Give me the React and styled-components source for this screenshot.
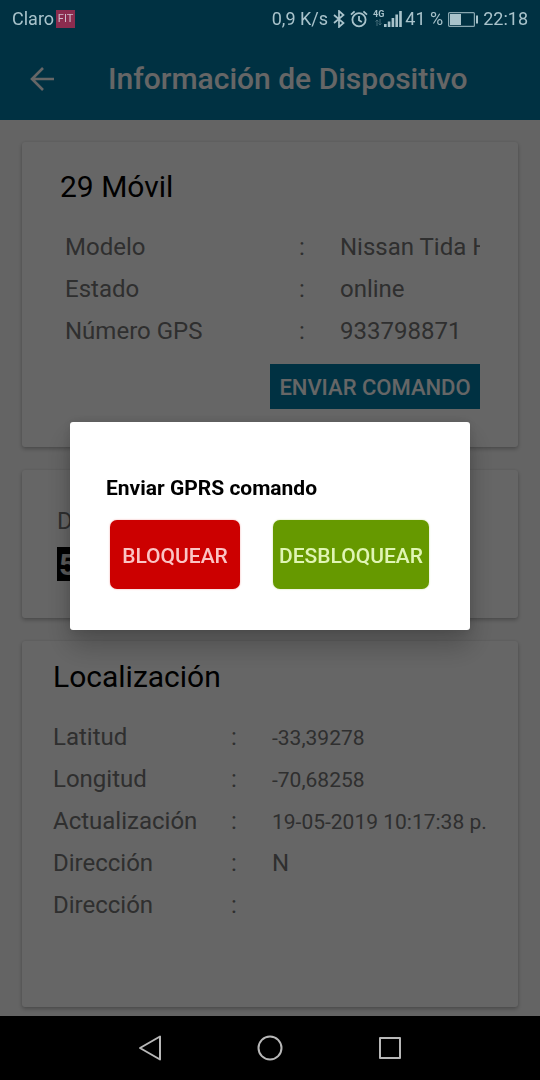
import React from "react";
import styled, { createGlobalStyle } from "styled-components";

const GlobalStyle = createGlobalStyle`
  * { box-sizing: border-box; }
  html, body { margin: 0; }
  body {
    background: #fafafa;
    color: #757575;
    font-family: Roboto, "Noto Sans", sans-serif;
  }
  h1, h2, p { margin: 0; }
  button { font-family: inherit; cursor: pointer; }
`;

const Screen = styled.div`
  display: flex;
  flex-direction: column;
  min-height: 100vh;
`;

const Header = styled.header`
  background: #007aa5;
  padding-top: 36px;
`;

const StatusBar = styled.div`
  position: fixed;
  inset: 0 0 auto;
  z-index: 3;
  display: flex;
  align-items: center;
  justify-content: space-between;
  height: 38px;
  padding: 0 12px;
  color: #a9c3cb;
  font-size: 18px;
  line-height: 20px;
  white-space: nowrap;
`;

const StatusGroup = styled.div`
  display: flex;
  align-items: center;
  gap: ${(p) => p.$gap}px;
`;

const FitBadge = styled.span`
  display: flex;
  align-items: center;
  justify-content: center;
  width: 19px;
  height: 18px;
  background: #8b2c4f;
  color: #cfbccb;
  font-size: 11px;
`;

const Toolbar = styled.div`
  display: flex;
  align-items: center;
  gap: 52px;
  height: 84px;
  padding: 2px 28px 0;
`;

const IconButton = styled.button`
  display: flex;
  align-items: center;
  justify-content: center;
  padding: 0;
  border: 0;
  background: transparent;
  color: ${(p) => p.$color};
`;

const ScreenTitle = styled.h1`
  color: #fff;
  font-size: 30px;
  font-weight: 500;
  line-height: 36px;
  white-space: nowrap;
`;

const Content = styled.main`
  flex: 1;
  display: flex;
  flex-direction: column;
  gap: 23px;
  padding: 22px 22px 9px;
`;

const Card = styled.section`
  flex: ${(p) => (p.$grow ? 1 : "none")};
  padding: ${(p) => p.$padding};
  border-radius: 3px;
  background: #fff;
  box-shadow: 0 2px 4px rgba(0, 0, 0, 0.26), 0 0 2px rgba(0, 0, 0, 0.08);
`;

const CardTitle = styled.h2`
  color: #000;
  font-size: 30px;
  font-weight: 400;
  line-height: 36px;
`;

const DataTable = styled.table`
  width: 100%;
  margin-top: ${(p) => p.$top}px;
  table-layout: fixed;
  border-collapse: collapse;
  font-size: 24px;
  line-height: 28px;
`;

const LabelCell = styled.th`
  width: ${(p) => p.$width}px;
  height: 42px;
  padding: 7px 0;
  font-weight: 400;
  text-align: left;
  vertical-align: baseline;
`;

const ColonCell = styled.td`
  width: ${(p) => p.$width}px;
  padding: 7px 0;
  vertical-align: baseline;
`;

const ValueCell = styled.td`
  padding: 0;
  overflow: hidden;
  font-size: ${(p) => (p.$small ? 21 : 24)}px;
  vertical-align: baseline;
  white-space: nowrap;
`;

const DeviceBody = styled.div`
  padding-left: 5px;
`;

const Actions = styled.div`
  display: flex;
  justify-content: flex-end;
  margin-top: 12px;
`;

const CommandButton = styled.button`
  width: 210px;
  height: 45px;
  padding: 2px 0 0;
  border: 0;
  background: #007aa5;
  color: #fff;
  font-size: 22px;
  font-weight: 500;
  white-space: nowrap;
`;

const DistanceLabel = styled.p`
  font-size: 24px;
  line-height: 28px;
`;

const Odometer = styled.div`
  width: 20px;
  height: 34px;
  margin-top: 12px;
  padding-left: 2px;
  background: #000;
  color: #e0e0e0;
  font-size: 30px;
  font-weight: 700;
  line-height: 35px;
`;

const Scrim = styled.div`
  position: fixed;
  inset: 0;
  z-index: 2;
  display: flex;
  align-items: center;
  justify-content: center;
  padding: 36px 70px 64px;
  background: rgba(0, 0, 0, 0.6);
`;

const Dialog = styled.div`
  flex: 1;
  max-width: 480px;
  padding: 52px 36px 41px;
  border-radius: 3px;
  background: #fff;
  box-shadow: 0 16px 28px rgba(0, 0, 0, 0.24), 0 0 12px rgba(0, 0, 0, 0.12);
`;

const DialogTitle = styled.h2`
  color: #000;
  font-size: 21px;
  font-weight: 700;
  line-height: 28px;
`;

const DialogActions = styled.div`
  display: flex;
  gap: 33px;
  margin-top: 18px;
  padding: 0 4px;
`;

const DialogButton = styled.button`
  flex: none;
  width: ${(p) => p.$width}px;
  height: 69px;
  padding: 2px 0 0;
  border: 0;
  border-radius: 7px;
  background: ${(p) => p.$fill};
  box-shadow: 0 0 2px ${(p) => p.$edge};
  color: ${(p) => p.$ink};
  font-size: 21px;
  font-weight: 500;
`;

const NavBar = styled.nav`
  position: sticky;
  bottom: 0;
  z-index: 3;
  display: flex;
  align-items: center;
  justify-content: center;
  gap: 92px;
  height: 64px;
  background: #000;
`;

const BluetoothIcon = () => (
  <svg width="12" height="18" viewBox="0 0 12 18" fill="none" stroke="currentColor" strokeWidth="1.7" aria-hidden="true">
    <path d="M1 5l9.500 8-4.500 4V1l4.500 4L1 13" />
  </svg>
);

const AlarmIcon = () => (
  <svg width="18" height="18" viewBox="0 0 18 18" fill="none" stroke="currentColor" strokeWidth="1.8" aria-hidden="true">
    <circle cx="9" cy="9.8" r="6.600" />
    <path d="M9 6v4.2l2.8 1.7M1 4.6L4.6 1.4M17 4.6l-3.6-3.2" />
  </svg>
);

const Signal = styled.div`
  display: flex;
  align-items: flex-start;
  height: 18px;
`;

const Network = styled.div`
  display: flex;
  flex-direction: column;
  align-items: center;
`;

const NetworkType = styled.span`
  font-family: "Liberation Sans Narrow", Roboto, sans-serif;
  font-size: 9px;
  font-weight: 700;
  line-height: 9px;
`;

const DataArrowsIcon = () => (
  <svg width="7" height="7" viewBox="0 0 7 7" fill="none" stroke="currentColor" opacity="0.4" aria-hidden="true">
    <path d="M2 7V1M.5 2.500L2 1l1.500 1.500M5 0v6M3.500 4.500L5 6l1.500-1.500" />
  </svg>
);

const SignalIcon = () => (
  <svg width="18" height="18" viewBox="0 0 18 18" fill="currentColor" aria-hidden="true">
    <path d="M0 14h2.600v3H0zM3.800 11.500h2.600V17H3.800zM7.600 8h2.600v9H7.600zM11.400 4.500h2.600v12.500h-2.600zM15.200 1h2.600v16h-2.600z" />
  </svg>
);

const BatteryIcon = () => (
  <svg width="30" height="15" viewBox="0 0 30 15" aria-hidden="true">
    <rect x="0.600" y="0.600" width="25.800" height="13.800" rx="1" fill="none" stroke="currentColor" strokeWidth="1.200" opacity="0.800" />
    <rect x="2" y="2" width="11" height="11" fill="currentColor" />
    <rect x="28" y="3.500" width="2" height="8" fill="currentColor" />
  </svg>
);

const ArrowIcon = () => (
  <svg width="28" height="28" viewBox="0 0 28 28" fill="none" stroke="currentColor" strokeWidth="2.600" aria-hidden="true">
    <path d="M26 14H4M15 3L4 14l11 11" />
  </svg>
);

const NavIcon = ({ children }) => (
  <svg width="28" height="28" viewBox="0 0 28 28" fill="none" stroke="currentColor" strokeWidth="2" strokeLinejoin="round" aria-hidden="true">
    {children}
  </svg>
);

const DEVICE = [
  { label: "Modelo", value: "Nissan Tida H" },
  { label: "Estado", value: "online" },
  { label: "Número GPS", value: "933798871" },
];

const LOCATION = [
  { label: "Latitud", value: "-33,39278", small: true },
  { label: "Longitud", value: "-70,68258", small: true },
  { label: "Actualización", value: "19-05-2019 10:17:38 p.", small: true },
  { label: "Dirección", value: "N" },
  { label: "Dirección", value: "" },
];

const Details = ({ rows, labelWidth, colonWidth, top }) => (
  <DataTable $top={top}>
    <tbody>
      {rows.map((row, i) => (
        <tr key={i}>
          <LabelCell scope="row" $width={labelWidth}>{row.label}</LabelCell>
          <ColonCell $width={colonWidth}>:</ColonCell>
          <ValueCell $small={row.small}>{row.value}</ValueCell>
        </tr>
      ))}
    </tbody>
  </DataTable>
);

export default function App() {
  return (
    <Screen>
      <GlobalStyle />
      <StatusBar>
        <StatusGroup $gap={2}>
          <span>Claro</span>
          <FitBadge>FIT</FitBadge>
        </StatusGroup>
        <StatusGroup $gap={5}>
          <span>0,9 K/s</span>
          <BluetoothIcon />
          <AlarmIcon />
          <StatusGroup $gap={3}>
            <Signal>
              <Network>
                <NetworkType>4G</NetworkType>
                <DataArrowsIcon />
              </Network>
              <SignalIcon />
            </Signal>
            <span>41 %</span>
          </StatusGroup>
          <BatteryIcon />
          <span>22:18</span>
        </StatusGroup>
      </StatusBar>

      <Header>
        <Toolbar>
          <IconButton type="button" aria-label="Volver" $color="#fff">
            <ArrowIcon />
          </IconButton>
          <ScreenTitle>Información de Dispositivo</ScreenTitle>
        </Toolbar>
      </Header>

      <Content>
        <Card $padding="27px 38px 38px">
          <CardTitle>29 Móvil</CardTitle>
          <DeviceBody>
            <Details rows={DEVICE} labelWidth={234} colonWidth={41} top={21} />
          </DeviceBody>
          <Actions>
            <CommandButton type="button">ENVIAR COMANDO</CommandButton>
          </Actions>
        </Card>

        <Card $padding="37px 35px">
          <DistanceLabel>D</DistanceLabel>
          <Odometer>5</Odometer>
        </Card>

        <Card $grow $padding="18px 22px 20px 31px">
          <CardTitle>Localización</CardTitle>
          <Details rows={LOCATION} labelWidth={178} colonWidth={41} top={21} />
        </Card>
      </Content>

      <Scrim>
        <Dialog role="dialog" aria-modal="true" aria-labelledby="command-title">
          <DialogTitle id="command-title">Enviar GPRS comando</DialogTitle>
          <DialogActions>
            <DialogButton type="button" $width={130} $fill="#cc0000" $edge="#f0a0a0" $ink="#fbc4c4">
              BLOQUEAR
            </DialogButton>
            <DialogButton type="button" $width={156} $fill="#669900" $edge="#c8dc98" $ink="#e0f5b4">
              DESBLOQUEAR
            </DialogButton>
          </DialogActions>
        </Dialog>
      </Scrim>

      <NavBar>
        <IconButton type="button" aria-label="Atrás" $color="#b8b8b8">
          <NavIcon><path d="M24 2.500v23L4 14z" /></NavIcon>
        </IconButton>
        <IconButton type="button" aria-label="Inicio" $color="#b8b8b8">
          <NavIcon><circle cx="14" cy="14" r="11.500" /></NavIcon>
        </IconButton>
        <IconButton type="button" aria-label="Recientes" $color="#b8b8b8">
          <NavIcon><rect x="4" y="4" width="20" height="20" /></NavIcon>
        </IconButton>
      </NavBar>
    </Screen>
  );
}
